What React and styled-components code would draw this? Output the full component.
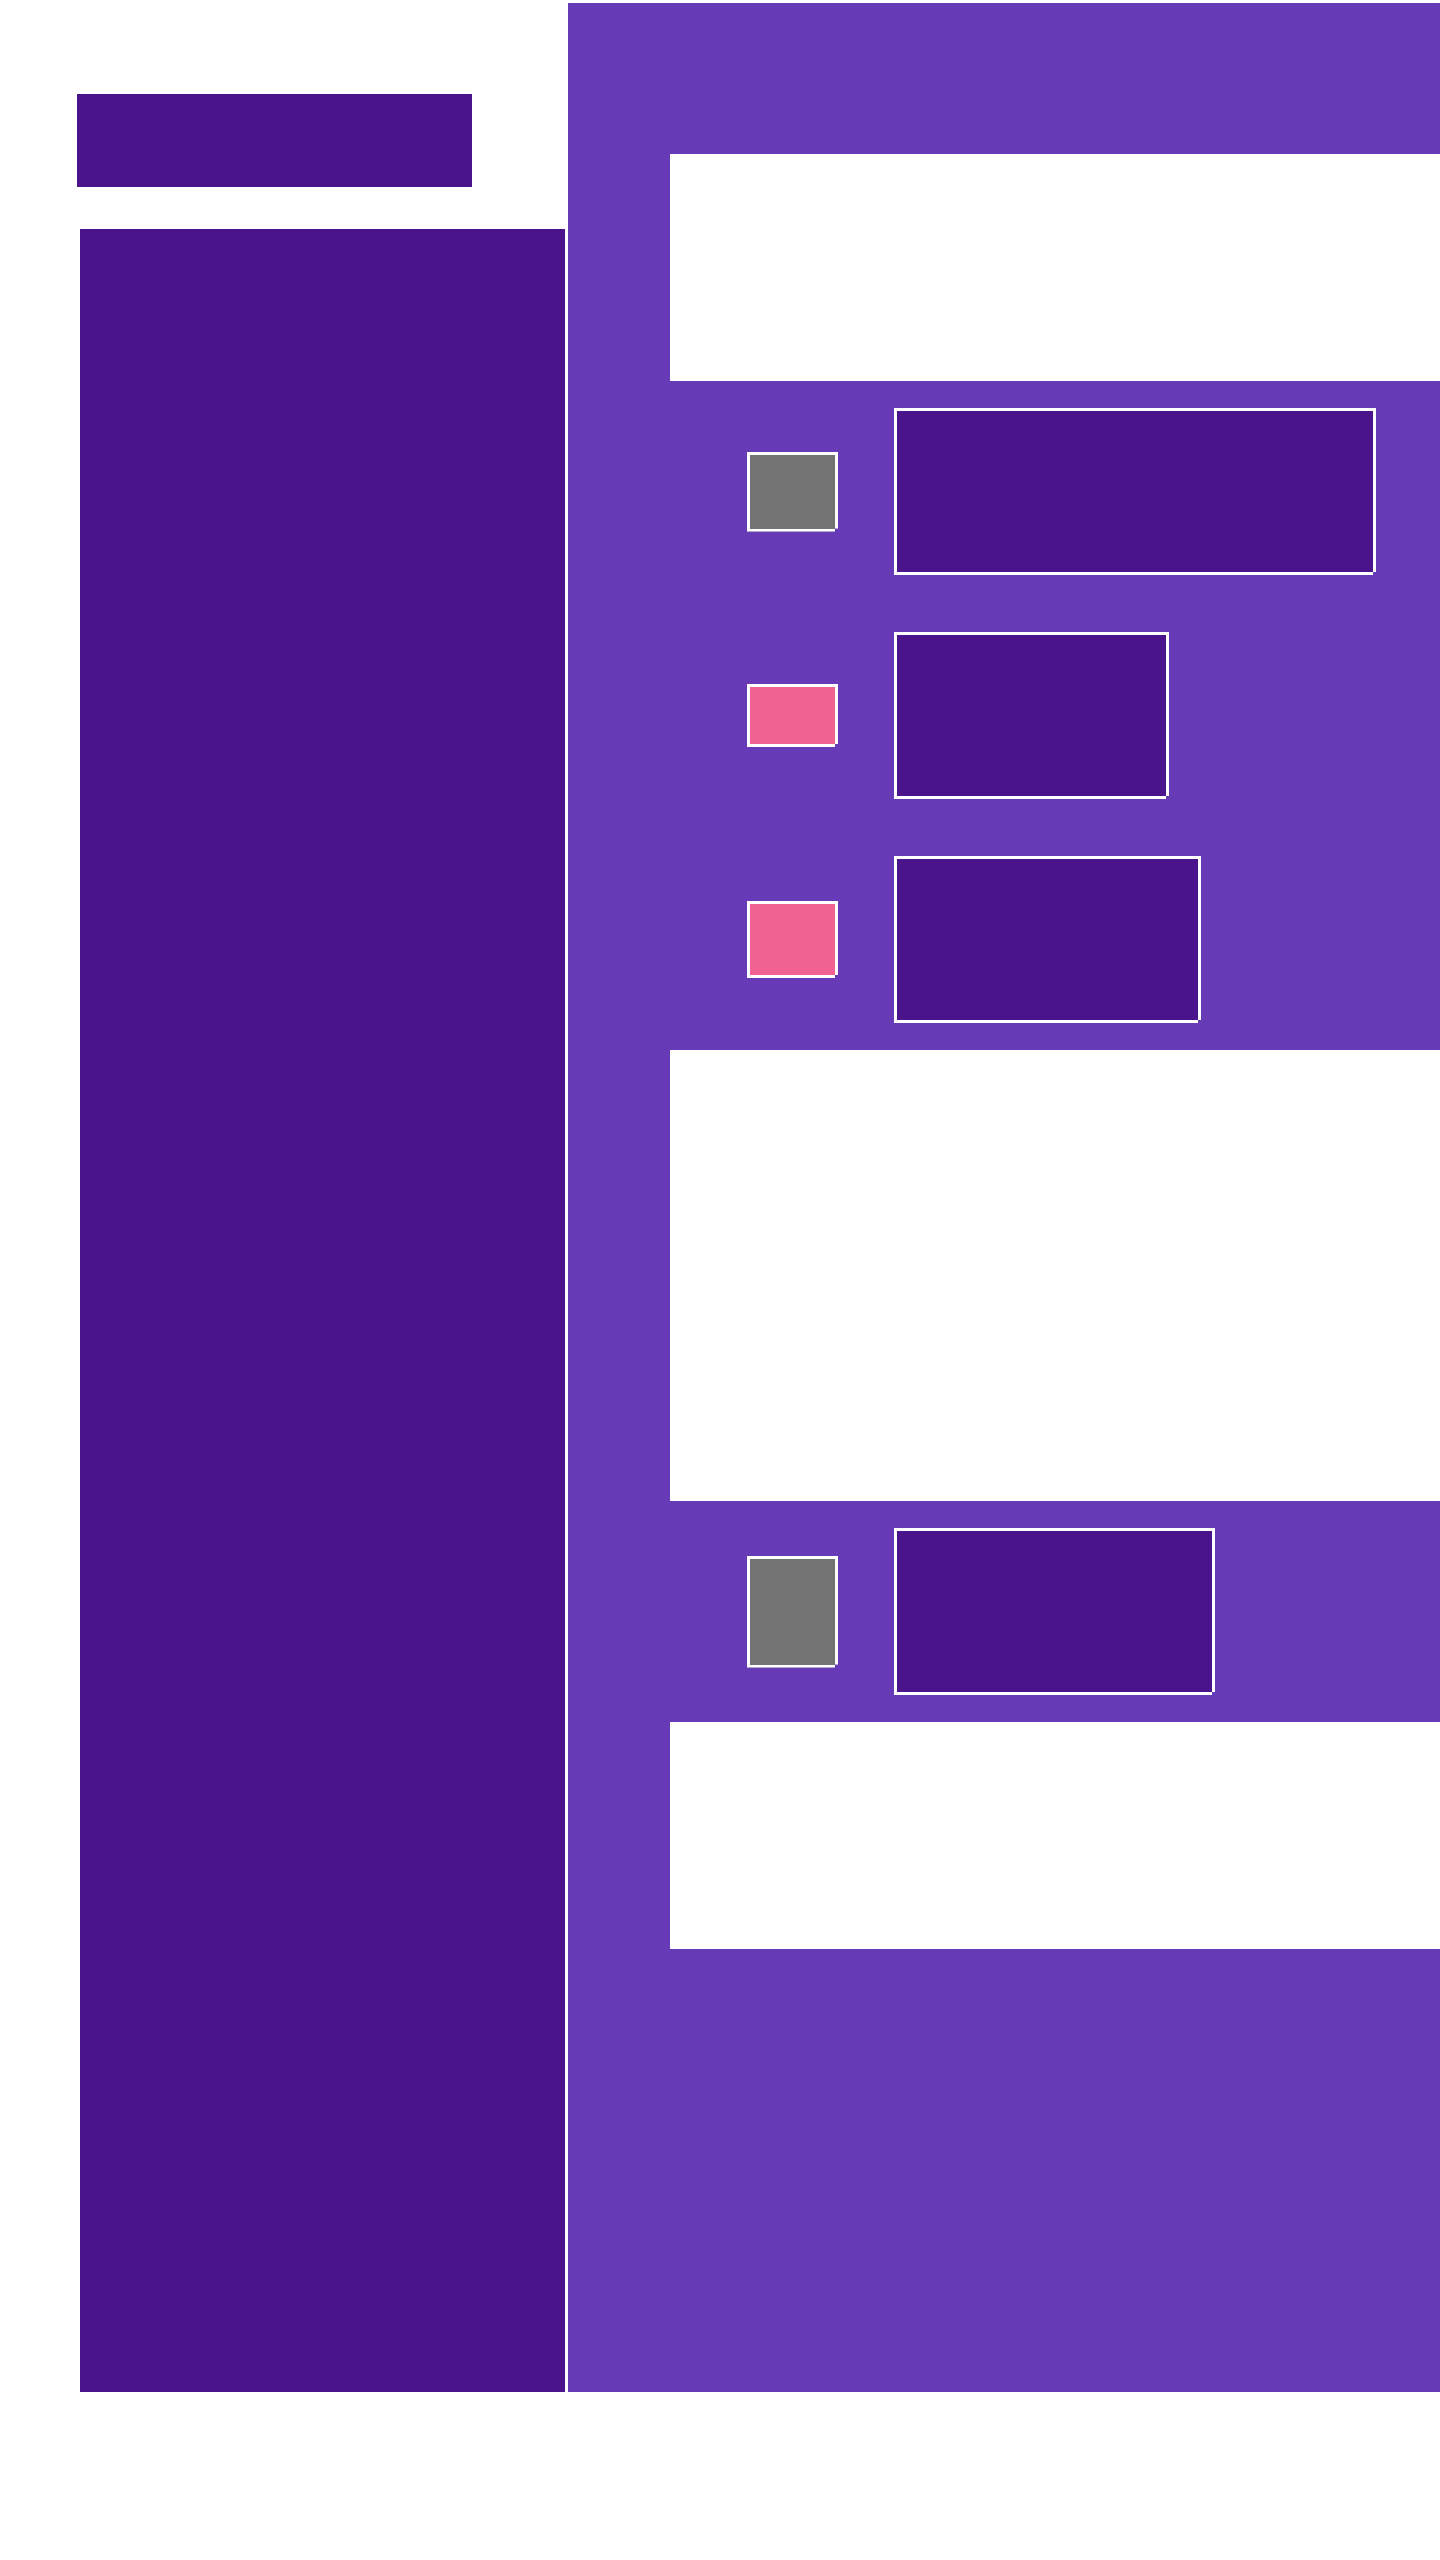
import React from "react";
import styled, { createGlobalStyle } from "styled-components";

const GlobalStyle = createGlobalStyle`
  html, body {
    margin: 0;
    padding: 0;
    background: #ffffff;
    font-family: "Liberation Sans", Arial, sans-serif;
  }
`;

const notch = `polygon(0 0, 100% 0, 100% calc(100% - 3px), calc(100% - 3px) calc(100% - 3px), calc(100% - 3px) 100%, 0 100%)`;

const Page = styled.div`
  display: flex;
  align-items: flex-start;
  width: 1440px;
  height: 2560px;
`;

const LeftColumn = styled.div`
  display: flex;
  flex-direction: column;
  width: 488px;
  margin-left: 77px;
  padding-top: 94px;
`;

const Logo = styled.div`
  width: 395px;
  height: 93px;
  background: #4a148c;
`;

const Sidebar = styled.nav`
  margin-top: 42px;
  margin-left: 3px;
  width: 485px;
  height: 2163px;
  background: #4a148c;
`;

const Panel = styled.main`
  flex: 1;
  margin-left: 3px;
  margin-top: 3px;
  height: 2389px;
  background: #673ab7;
  padding: 151px 0 0 102px;
  box-sizing: border-box;
  display: flex;
  flex-direction: column;
`;

const WhiteBlock = styled.section`
  height: ${(p) => p.h}px;
  background: #ffffff;
`;

const RowGroup = styled.section`
  display: flex;
  flex-direction: column;
  gap: 57px;
  padding: 27px 0;
`;

const Row = styled.div`
  display: flex;
  align-items: center;
  gap: 56px;
  padding-left: 77px;
`;

const Swatch = styled.div`
  width: 91px;
  height: ${(p) => p.h}px;
  box-sizing: border-box;
  background: ${(p) => (p.pink ? "#f06292" : "#737373")};
  border: 3px solid #ffffff;
  clip-path: ${notch};
`;

const Card = styled.div`
  width: ${(p) => p.w}px;
  height: 167px;
  box-sizing: border-box;
  background: #4a148c;
  border: 3px solid #ffffff;
  clip-path: ${notch};
`;

const firstRows = [
  { sh: 80, pink: false, w: 482 },
  { sh: 63, pink: true, w: 275 },
  { sh: 77, pink: true, w: 307 },
];

export default function App() {
  return (
    <Page>
      <GlobalStyle />
      <LeftColumn>
        <Logo />
        <Sidebar />
      </LeftColumn>
      <Panel>
        <WhiteBlock h={227} />
        <RowGroup>
          {firstRows.map((r, i) => (
            <Row key={i}>
              <Swatch h={r.sh} pink={r.pink} />
              <Card w={r.w} />
            </Row>
          ))}
        </RowGroup>
        <WhiteBlock h={451} />
        <RowGroup>
          <Row>
            <Swatch h={112} />
            <Card w={321} />
          </Row>
        </RowGroup>
        <WhiteBlock h={227} />
      </Panel>
    </Page>
  );
}
